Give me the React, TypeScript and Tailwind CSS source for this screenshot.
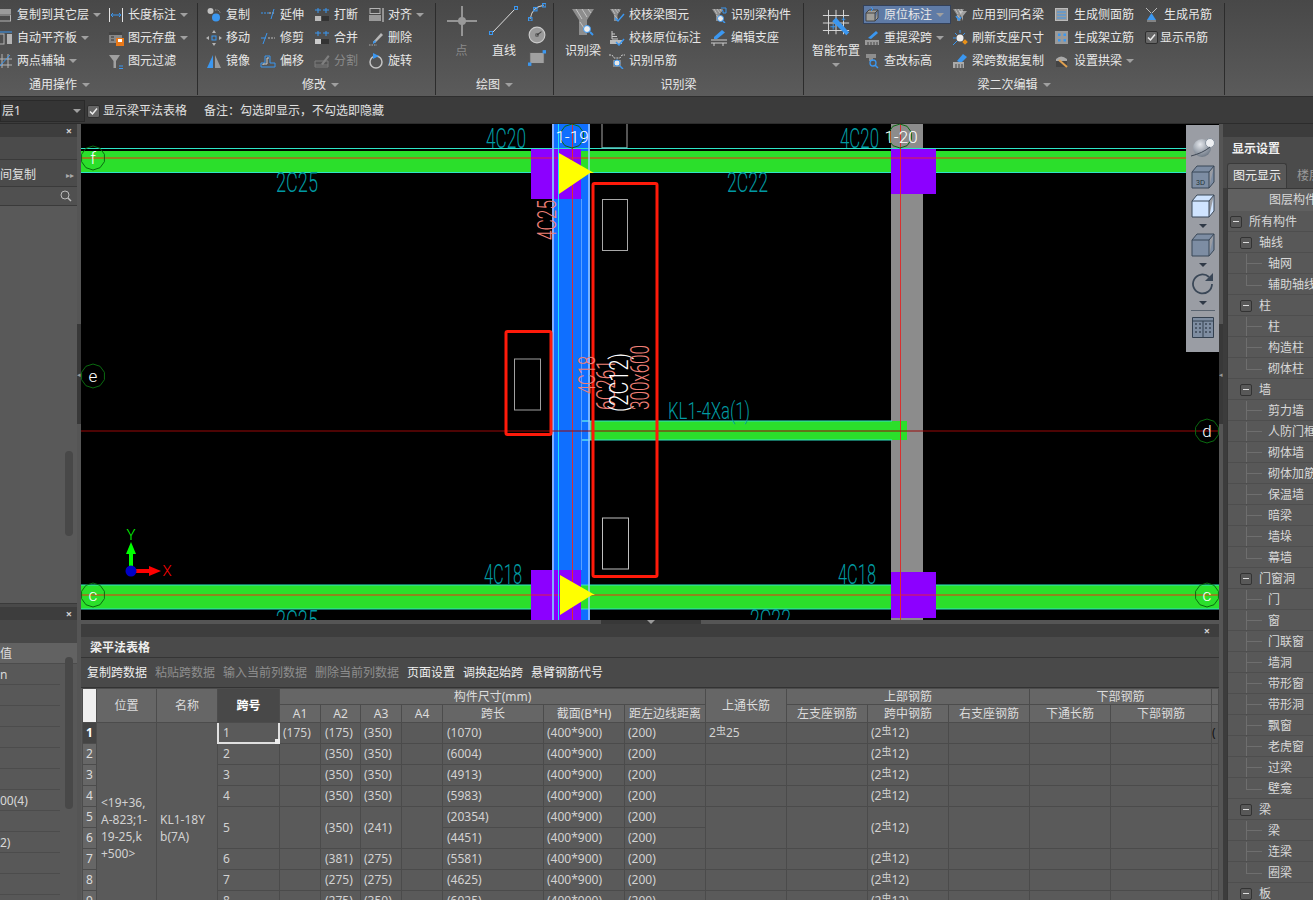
import type { ReactNode } from "react";

const B = "#3b97f0";
const G = "#b4b4b4";
const W = "#e4e4e4";

function S({ children, size = 16 }: { children: ReactNode; size?: number }) {
  return (
    <svg width={size} height={size} viewBox="0 0 16 16" fill="none" className="shrink-0">
      {children}
    </svg>
  );
}

const Hatch = (
  <>
    <path d="M1 2h11L8.500 8v6H5V8z" fill="#8d8d8d" />
    <path d="M3 2l3 5M6 2l3 4M9 2l1.500 2.500M5.500 8l3 4" stroke="#c4c4c4" strokeWidth="0.8" />
  </>
);

const icons: Record<string, ReactNode> = {
  copyLayer: (
    <S>
      <rect x="1" y="2" width="13" height="5" fill="#9a9a9a" />
      <rect x="1.500" y="8" width="12" height="6" stroke={G} />
    </S>
  ),
  autoAlign: (
    <S>
      <path d="M1 2h14" stroke={B} />
      <rect x="2" y="4" width="5" height="10" stroke={G} />
      <rect x="10" y="4" width="5" height="10" fill={G} />
    </S>
  ),
  twoPoint: (
    <S>
      <path d="M0 6h15M0 12h15M5 1v14M11 1v14" stroke={G} />
      <path d="M1 15L13 2" stroke={B} />
    </S>
  ),
  lengthDim: (
    <S>
      <path d="M1.500 1v14M14.500 1v14" stroke={W} />
      <path d="M3 8h10M3 8l2-2M3 8l2 2M13 8l-2-2M13 8l-2 2" stroke={B} />
    </S>
  ),
  saveEl: (
    <S>
      <rect x="1" y="2" width="13" height="11" fill="#888" />
      <rect x="1" y="2" width="13" height="3" fill="#444" />
      <path d="M3 7h3M3 10h3" stroke="#333" />
      <rect x="8" y="8" width="8" height="8" fill="#e8791a" />
      <rect x="10" y="9" width="4" height="3" fill="#fff" />
    </S>
  ),
  filter: (
    <S>
      <path d="M1 2h11L8 8v7H5.500V8z" fill="#a0a0a0" />
      <path d="M11 13h4M11 15.500h4" stroke={B} />
    </S>
  ),
  copy: (
    <S>
      <circle cx="4.500" cy="4" r="3" fill="#c0c0c0" />
      <circle cx="10" cy="10.500" r="4" fill={B} />
      <path d="M9 3h3l2 2v1" stroke="#999" strokeDasharray="1.500 1" />
    </S>
  ),
  move: (
    <S>
      <rect x="6" y="6" width="4" height="4" stroke={B} />
      <path d="M8 0l2 3H6zM8 16l2-3H6zM0 8l3-2v4zM16 8l-3-2v4z" fill={G} />
    </S>
  ),
  mirror: (
    <S>
      <path d="M7 2v13H1z" fill={B} />
      <path d="M9 2v13h6z" fill="#9a9a9a" />
    </S>
  ),
  extend: (
    <S>
      <path d="M1 6h8" stroke={B} strokeDasharray="2 1" />
      <path d="M9 6h6" stroke="#bbb" strokeDasharray="2 1" />
      <path d="M11 12l3-10" stroke={B} />
    </S>
  ),
  trim: (
    <S>
      <path d="M1 8h5" stroke={B} />
      <path d="M8 8h7" stroke="#bbb" strokeDasharray="2 1" />
      <path d="M3 14l4-11" stroke={B} />
    </S>
  ),
  offset: (
    <S>
      <path d="M1 14V10h4V3h5v7h5v4z" stroke={B} strokeLinejoin="round" />
      <path d="M3 12v-1h4V5h2" stroke="#ccc" />
    </S>
  ),
  breakEl: (
    <S>
      <path d="M4 1v5M1 3h6M12 1v5M9 3h6" stroke={B} />
      <rect x="1" y="9" width="6" height="5" fill="#bbb" />
      <rect x="8" y="9" width="7" height="5" fill="#333" />
    </S>
  ),
  merge: (
    <S>
      <path d="M4 1v5M1 3h6M12 1v5M9 3h6" stroke={B} />
      <rect x="1" y="9" width="6" height="5" fill="#ccc" />
      <rect x="7" y="9" width="8" height="5" fill="#333" />
    </S>
  ),
  split: (
    <S>
      <path d="M1 8h13v6H1zM1 12h13" stroke="#7c7c7c" />
      <path d="M7 11l7-9 1.500 1.500L9 12z" fill="#808080" />
    </S>
  ),
  align: (
    <S>
      <rect x="2" y="1.500" width="10" height="5" stroke={G} />
      <rect x="1" y="8" width="12" height="6" fill="#999" />
      <path d="M15 1v14" stroke="#ddd" />
    </S>
  ),
  del: (
    <S>
      <path d="M5 12l8-9 2 2-8 8z" fill="#b8b8b8" />
      <path d="M5 12l2-2 1 2-3 2z" fill={B} />
      <path d="M1 15h8" stroke="#aaa" strokeDasharray="1.500 1" />
    </S>
  ),
  rotate: (
    <S>
      <circle cx="8" cy="9" r="6" stroke="#c4c4c4" strokeWidth="1.500" />
      <path d="M5 0l6 3-6 3z" fill={B} />
    </S>
  ),
  arc: (
    <S size={18}>
      <path d="M2 14C3 7 7 3 14 2" stroke="#ccc" />
      <rect x="0.500" y="13" width="3" height="3" stroke={B} />
      <rect x="5" y="4" width="3" height="3" stroke={B} />
      <rect x="13" y="0.500" width="3" height="3" stroke={B} />
    </S>
  ),
  circle: (
    <S size={18}>
      <circle cx="8" cy="8" r="7" fill="#9a9a9a" stroke="#ccc" />
      <path d="M8 8l4-3" stroke="#444" />
      <rect x="7" y="7" width="2" height="2" stroke="#333" strokeWidth="0.600" />
    </S>
  ),
  rect: (
    <S size={18}>
      <rect x="1.500" y="3" width="13" height="10" fill="#a0a0a0" stroke="#555" />
      <rect x="0" y="12" width="3" height="3" fill={B} />
      <rect x="13" y="1" width="3" height="3" fill={B} />
    </S>
  ),
  checkBeam: (
    <S>
      {Hatch}
      <path d="M6 11l3 3 6-7" stroke={B} strokeWidth="1.500" />
    </S>
  ),
  checkLabel: (
    <S>
      <path d="M3 1v8h6M3 4h3M3 6.500h5" stroke="#ccc" />
      <path d="M1 10h12v4H1z" fill="#bbb" />
      <path d="M7 12l3 3 5-6" stroke={B} strokeWidth="1.500" />
    </S>
  ),
  hanger: (
    <S>
      <path d="M0 2h3l2 3h6l2-3h3" stroke="#ccc" strokeDasharray="2 1" />
      <rect x="4" y="7" width="8" height="7" fill="#888" />
      <circle cx="8" cy="10" r="3" fill="#e8e8e8" stroke={B} />
      <path d="M11 13l3 3" stroke={B} strokeWidth="1.500" />
    </S>
  ),
  beamPart: (
    <S>
      {Hatch}
      <path d="M10 1h5v5h-3V3.500h-1" stroke={B} />
      <circle cx="9.500" cy="11.500" r="3" fill="#e8e8e8" stroke={B} />
      <path d="M12 14l2 2" stroke={B} strokeWidth="1.500" />
    </S>
  ),
  editSupport: (
    <S>
      <path d="M3 7l8-7 3 2.500-8 6.500H3z" fill={B} />
      <path d="M0 10h16M0 13h16M3 13v3M12 13v3" stroke="#ccc" />
    </S>
  ),
  originLabel: (
    <S>
      <path d="M2 6h9v8H2zM2 6l3-3h9l-3 3M11 14l3-3V3" stroke="#444" fill="#a09f9a" />
      <path d="M7 0l2 2-2 2" stroke={B} />
    </S>
  ),
  reExtract: (
    <S>
      <path d="M4 8l8-7 2 2-7 6z" fill={B} />
      <path d="M1 10h14v5H1z" fill="#9a9a9a" />
      <path d="M4 12v3M7 12v3M10 12v3M13 12v3" stroke="#444" />
    </S>
  ),
  checkLevel: (
    <S>
      <path d="M2 1h10v4H9v3H5V5H2z" fill="#8e8e8e" />
      <circle cx="9" cy="10" r="3" stroke={B} strokeWidth="1.300" />
      <path d="M11 12l3 3" stroke={B} strokeWidth="1.500" />
    </S>
  ),
  applySame: (
    <S>
      {Hatch}
      <path d="M7 4h8l-4 5v5" fill="#ddd" opacity="0.6" />
      <path d="M4 9l3 4 2-3" stroke={B} strokeWidth="1.500" />
    </S>
  ),
  refresh: (
    <S>
      <circle cx="8" cy="8" r="3.500" fill="#eee" />
      <path d="M8 0v3M1 8h3M3 3l2 2M13 3l-2 2M3 13l2-2M1 15l3-3" stroke={B} />
      <rect x="11" y="10" width="4" height="4" fill="#e8911a" transform="rotate(45 13 12)" />
    </S>
  ),
  spanCopy: (
    <S>
      <path d="M5 8l6-7 4 3-6 6z" fill={B} />
      <path d="M1 9h11v6H1z" fill="#aaa" />
      <path d="M4 11v4M7 11v4M10 11v4" stroke="#444" />
    </S>
  ),
  sideBar: (
    <S>
      <rect x="1.500" y="1.500" width="12" height="12" fill="#9a9a9a" stroke="#bbb" />
      <path d="M3 5h9M3 8h9M3 11h9" stroke={B} />
    </S>
  ),
  frameBar: (
    <S>
      <rect x="1" y="1" width="13" height="13" fill="#9a9a9a" />
      <rect x="4" y="3.500" width="2.500" height="2.500" fill={B} />
      <rect x="9.500" y="3.500" width="2.500" height="2.500" fill={B} />
      <rect x="4" y="9" width="2.500" height="2.500" fill={B} />
      <rect x="9.500" y="9" width="2.500" height="2.500" fill={B} />
    </S>
  ),
  arch: (
    <S>
      <path d="M2 6q5-5 11 0v2H2z" fill="#a8a8a8" />
      <path d="M2 8h11v6H2z" fill="#444" />
      <path d="M5 7l8 7" stroke="#e0a050" strokeWidth="2" />
    </S>
  ),
  genHanger: (
    <S>
      <path d="M2 1l5 5M13 1L8 6" stroke="#bbb" />
      <path d="M7.500 6L12 13H3z" fill={B} />
      <path d="M3 14h9" stroke="#bbb" />
    </S>
  ),
};

function Caret({ color = "border-t-[#a0a0a0]" }: { color?: string }) {
  return <span className={`w-0 h-0 shrink-0 border-x-[4px] border-t-[4px] border-x-transparent ${color}`} />;
}

function Item({ icon, label, arrow, active, dim }: { icon: string; label: string; arrow?: boolean; active?: boolean; dim?: boolean }) {
  return (
    <div
      className={`flex h-[23px] items-center whitespace-nowrap ${dim ? "text-[#8a8a8a]" : "text-[#e8e8e8]"}`}
    >
      <span
        className={`flex h-[19px] items-center pr-[6px] ${active ? "bg-[#5f7ba6] border border-[#33415a] -ml-[1px]" : ""}`}
      >
        {icons[icon]}
        <span className="ml-1">{label}</span>
        {arrow && (
          <span className="ml-[4px] flex">
            <Caret />
          </span>
        )}
      </span>
    </div>
  );
}

function Col({ w, items }: { w: string; items: { icon: string; label: string; arrow?: boolean; active?: boolean; dim?: boolean }[] }) {
  return (
    <div className={`flex flex-col shrink-0 ${w}`}>
      {items.map((it) => (
        <Item key={it.label} {...it} />
      ))}
    </div>
  );
}

function Group({ w, label, arrow, children, labelClass }: { w: string; label: string; arrow?: boolean; children: ReactNode; labelClass?: string }) {
  return (
    <div className={`flex flex-col shrink-0 h-[92px] mt-[3px] border-r border-[#2c2c2c] ${w}`}>
      <div className="flex h-[69px]">{children}</div>
      <div className={`flex flex-1 items-center gap-[5px] pt-[3px] text-[#e8e8e8] ${labelClass ?? "justify-center"}`}>
        <span>{label}</span>
        {arrow && <Caret />}
      </div>
    </div>
  );
}

function Ribbon() {
  return (
    <div className="flex h-[97px] shrink-0 overflow-hidden bg-linear-to-b from-[#484848] to-[#5b5b5b] border-b border-[#2e2e2e]">
      <Group w="w-[198px]" label="通用操作" arrow labelClass="pl-[29px]">
        <Col
          w="w-[111px] -ml-[3px]"
          items={[
            { icon: "copyLayer", label: "复制到其它层", arrow: true },
            { icon: "autoAlign", label: "自动平齐板", arrow: true },
            { icon: "twoPoint", label: "两点辅轴", arrow: true },
          ]}
        />
        <Col
          w="w-[90px]"
          items={[
            { icon: "lengthDim", label: "长度标注", arrow: true },
            { icon: "saveEl", label: "图元存盘", arrow: true },
            { icon: "filter", label: "图元过滤" },
          ]}
        />
      </Group>
      <Group w="w-[238px] pl-[8px]" label="修改" arrow>
        <Col w="w-[54px]" items={[{ icon: "copy", label: "复制" }, { icon: "move", label: "移动" }, { icon: "mirror", label: "镜像" }]} />
        <Col w="w-[54px]" items={[{ icon: "extend", label: "延伸" }, { icon: "trim", label: "修剪" }, { icon: "offset", label: "偏移" }]} />
        <Col w="w-[54px]" items={[{ icon: "breakEl", label: "打断" }, { icon: "merge", label: "合并" }, { icon: "split", label: "分割", dim: true }]} />
        <Col w="w-[60px]" items={[{ icon: "align", label: "对齐", arrow: true }, { icon: "del", label: "删除" }, { icon: "rotate", label: "旋转" }]} />
      </Group>
      <Group w="w-[118px]" label="绘图" arrow>
        <div className="w-[47px] flex flex-col items-center pt-[3px] pl-[4px]">
          <svg width="30" height="30" viewBox="0 0 30 30" fill="none">
            <path d="M15 0v30M0 15h30" stroke="#ddd" />
            <circle cx="15" cy="15" r="4" fill="#999" />
          </svg>
          <span className="mt-[9px] text-[#8a8a8a]">点</span>
        </div>
        <div className="w-[42px] flex flex-col items-center pt-[3px]">
          <svg width="30" height="30" viewBox="0 0 30 30" fill="none">
            <path d="M3 27L26 3" stroke="#ddd" />
            <rect x="0.500" y="25.500" width="3" height="3" stroke={B} />
            <rect x="25.500" y="0.500" width="3" height="3" stroke={B} />
          </svg>
          <span className="mt-[9px] text-[#e8e8e8]">直线</span>
        </div>
        <div className="flex flex-col gap-[5px] pl-[3px]">
          {icons.arc}
          {icons.circle}
          {icons.rect}
        </div>
      </Group>
      <Group w="w-[250px]" label="识别梁">
        <div className="w-[55px] flex flex-col items-center pt-[3px] pl-[3px] text-[#e8e8e8]">
          <svg width="26" height="30" viewBox="0 0 26 30" fill="none">
            <path d="M2 3h22l-7 11v15H9V14z" fill="#8d8d8d" />
            <path d="M6 3l6 10M12 3l5 8M18 3l3 4M10 16l6 9" stroke="#c4c4c4" />
            <circle cx="17" cy="23" r="3.500" fill="#eee" stroke={B} />
            <path d="M20 26l3 3" stroke={B} strokeWidth="2" />
          </svg>
          <span className="mt-[9px]">识别梁</span>
        </div>
        <Col w="w-[102px]" items={[{ icon: "checkBeam", label: "校核梁图元" }, { icon: "checkLabel", label: "校核原位标注" }, { icon: "hanger", label: "识别吊筋" }]} />
        <Col w="w-[90px]" items={[{ icon: "beamPart", label: "识别梁构件" }, { icon: "editSupport", label: "编辑支座" }]} />
      </Group>
      <Group w="w-[421px]" label="梁二次编辑" arrow>
        <div className="w-[60px] flex flex-col items-center pt-[5px] pl-[4px] text-[#e8e8e8]">
          <svg width="30" height="30" viewBox="0 0 32 32" fill="none">
            <path d="M8 2v26M16 2v26M24 2v26M2 8h28M2 16h28M2 24h28" stroke="#ddd" />
            <path d="M12 14l4-4 14 16-3 3z" fill={B} />
            <path d="M10 20h6M13 17v6M22 12h4M24 10v4" stroke={B} />
          </svg>
          <span className="mt-[7px]">智能布置</span>
          <span className="mt-[6px] flex">
            <Caret />
          </span>
        </div>
        <Col
          w="w-[88px]"
          items={[
            { icon: "originLabel", label: "原位标注", arrow: true, active: true },
            { icon: "reExtract", label: "重提梁跨", arrow: true },
            { icon: "checkLevel", label: "查改标高" },
          ]}
        />
        <Col w="w-[102px]" items={[{ icon: "applySame", label: "应用到同名梁" }, { icon: "refresh", label: "刷新支座尺寸" }, { icon: "spanCopy", label: "梁跨数据复制" }]} />
        <Col
          w="w-[90px]"
          items={[
            { icon: "sideBar", label: "生成侧面筋" },
            { icon: "frameBar", label: "生成架立筋" },
            { icon: "arch", label: "设置拱梁", arrow: true },
          ]}
        />
        <div className="flex flex-col">
          <Item icon="genHanger" label="生成吊筋" />
          <div className="flex h-[23px] items-center text-[#e8e8e8] ml-px">
            <CheckBox />
            <span className="ml-[2px]">显示吊筋</span>
          </div>
        </div>
      </Group>
    </div>
  );
}

function CheckBox() {
  return (
    <span className="flex h-[13px] w-[13px] shrink-0 items-center justify-center rounded-[2px] border border-[#2f2f2f] bg-[#666]">
      <svg width="9" height="9" viewBox="0 0 9 9" fill="none">
        <path d="M1 4.500l2.500 2.500L8 1.500" stroke="#eee" strokeWidth="1.500" />
      </svg>
    </span>
  );
}

function OptionsBar() {
  return (
    <div className="flex h-[27px] shrink-0 items-center bg-[#3b3b3b] pt-[2px] text-[#e0e0e0] border-b border-[#2c2c2c]">
      <div className="flex h-[22px] w-[85px] items-center justify-between bg-[#353535] border border-[#2a2a2a] pr-[3px] pl-[1px]">
        <span>层1</span>
        <Caret />
      </div>
      <span className="ml-[2px]">
        <CheckBox />
      </span>
      <span className="ml-[3px]">显示梁平法表格</span>
      <span className="ml-[17px]">备注：勾选即显示，不勾选即隐藏</span>
    </div>
  );
}

function PanelHead() {
  return (
    <div className="flex h-[13px] shrink-0 items-center justify-end bg-[#3d3d3d] pr-[5px] text-[11px] font-bold leading-none text-[#d0d0d0]">
      ×
    </div>
  );
}

function LeftPanel() {
  const rows = ["n", "", "", "", "", "", "00(4)", "", "2)", "", "", ""];
  return (
    <div className="flex w-[77px] shrink-0 flex-col bg-[#494949] text-[#e0e0e0]">
      <PanelHead />
      <div className="h-[23px] shrink-0 bg-[#4b4b4b] border-b border-[#3a3a3a]" />
      <div className="flex h-[27px] shrink-0 items-center justify-between pr-[3px] pt-[3px] bg-[#4b4b4b] border-b border-[#3a3a3a]">
        <span>间复制</span>
        <span className="text-[8px] text-[#aaa]">▸▸</span>
      </div>
      <div className="flex h-[19px] shrink-0 items-center justify-end pr-[5px] bg-[#505050] border-b border-[#3a3a3a]">
        <svg width="12" height="12" viewBox="0 0 12 12" fill="none">
          <circle cx="5" cy="5" r="4" stroke="#bbb" />
          <path d="M8 8l3 3" stroke="#bbb" strokeWidth="1.500" />
        </svg>
      </div>
      <div className="relative h-[398px] shrink-0 bg-[#595959] border-b border-[#3a3a3a]">
        <div className="absolute right-[4px] top-[245px] h-[85px] w-[8px] rounded bg-[#484848]" />
      </div>
      <div className="h-[3px] shrink-0" />
      <PanelHead />
      <div className="h-[23px] shrink-0 bg-[#484848]" />
      <div className="relative flex-1 overflow-hidden bg-[#585858]">
        <div className="flex h-[21px] items-center bg-[#626262] border-b border-[#4c4c4c] pt-px text-[#ddd]">值</div>
        {rows.map((r, i) => (
          <div key={i} className="flex h-[21px] w-[60px] items-center border-b border-[#4c4c4c] pt-[2px] text-[#d8d8d8]">
            {r}
          </div>
        ))}
        <div className="absolute right-[4px] top-[14px] h-[152px] w-[8px] rounded bg-[#484848]" />
      </div>
    </div>
  );
}

function Splitter() {
  return (
    <div className="flex w-[4px] shrink-0 items-start bg-[#555] pt-[200px]">
      <div className="flex h-[100px] w-[4px] items-center justify-center bg-[#383838]">
        <span className="text-[7px] leading-none text-[#999]">◂</span>
      </div>
    </div>
  );
}

function Ring({ cx, cy, label }: { cx: number; cy: number; label?: string }) {
  const pts = Array.from({ length: 10 }, (_, i) => {
    const a = (i / 10) * Math.PI * 2 - Math.PI / 2;
    return `${cx + 12 * Math.cos(a)},${cy + 12 * Math.sin(a)}`;
  }).join(" ");
  return (
    <>
      <polygon points={pts} stroke="#0a6a10" fill="none" />
      {label && (
        <text x={cx} y={cy + 6} textAnchor="middle" fontSize="17" fontWeight="300" fill="#fff" fontFamily="Roboto">
          {label}
        </text>
      )}
    </>
  );
}

function Cad({ x, y, w, size, label, fill = "#009aa2", rot }: { x: number; y: number; w: number; size: number; label: string; fill?: string; rot?: boolean }) {
  return (
    <text
      x={x}
      y={y}
      fontSize={size}
      fontWeight="300"
      fill={fill}
      fontFamily="Roboto"
      textLength={w}
      lengthAdjust="spacingAndGlyphs"
      transform={rot ? `rotate(-90 ${x} ${y})` : undefined}
    >
      {label}
    </text>
  );
}

function Scene() {
  return (
    <svg viewBox="81 124 1138 496" width="1138" height="496" className="block">
      <rect x="81" y="124" width="1138" height="496" fill="#000" />
      {/* 柱 */}
      <rect x="891" y="124" width="32" height="496" fill="#8c8c8c" />
      <rect x="552" y="124" width="38" height="496" fill="#0f6fff" />
      {/* 梁 */}
      <rect x="81" y="151" width="1138" height="22" fill="#2bdf2b" />
      <path d="M81 148.500h1138M81 172.500h1138" stroke="#2ee6c8" />
      <path d="M81 158h1138" stroke="#b0681a" strokeWidth="1.500" />
      <rect x="81" y="585" width="1138" height="24" fill="#2bdf2b" />
      <path d="M81 585h1138M81 609h1138" stroke="#2ee6c8" />
      <path d="M81 595h1138" stroke="#b0681a" strokeWidth="1.500" />
      <rect x="590" y="421" width="317" height="19" fill="#2bdf2b" />
      <path d="M581 421h311M581 440h311" stroke="#2ee6c8" />
      <path d="M581 421h9v19h-9" stroke="#6fd8ff" fill="none" />
      {/* 支座 */}
      <rect x="531" y="149" width="50" height="50" fill="#8c00ff" />
      <rect x="531" y="570" width="50" height="50" fill="#8c00ff" />
      <rect x="891" y="149" width="45" height="45" fill="#8c00ff" />
      <rect x="891" y="572" width="45" height="46" fill="#8c00ff" />
      <path d="M531 158h50M891 158h45M531 595h50M891 595h45" stroke="#e02040" />
      <path d="M553 124v496" stroke="#86aefc" strokeWidth="2" />
      <path d="M589 124v496" stroke="#9cc8ff" strokeWidth="1.500" />
      <path d="M558.500 124v496" stroke="#22e0f0" />
      <path d="M581.500 199v371" stroke="#5aa0ff" />
      {/* 轴线 */}
      <path d="M572.500 124v496M900.500 124v496" stroke="#d83030" />
      <path d="M81 431h1138" stroke="#9a0808" />
      <polygon points="559,153 559,194 590,173 594,173" fill="#ffff00" />
      <polygon points="560,575 560,615 592,595 595,595" fill="#ffff00" />
      {/* 选择框 */}
      <rect x="593" y="183.500" width="64" height="393" rx="1.500" stroke="#ff1a0a" strokeWidth="3" fill="none" />
      <rect x="506" y="331.500" width="45" height="103" rx="1.500" stroke="#ff1a0a" strokeWidth="3" fill="none" />
      <path d="M602 124v24h25v-24" stroke="#a8a8a8" fill="none" />
      <path d="M602 148h25" stroke="#30e0d0" />
      <rect x="602.500" y="199.500" width="25" height="51" stroke="#a8a8a8" fill="none" />
      <rect x="602.500" y="518" width="26" height="51" stroke="#c0c0c0" fill="none" />
      <rect x="514.500" y="359" width="26" height="51" stroke="#a0a0a0" fill="none" />
      {/* 标注 */}
      <Cad x={486} y={148} w={40} size={28} label="4C20" />
      <Cad x={840} y={148} w={39} size={28} label="4C20" />
      <Cad x={276} y={192} w={42} size={28} label="2C25" />
      <Cad x={727} y={192} w={41} size={28} label="2C22" />
      <Cad x={484} y={584} w={38} size={28} label="4C18" />
      <Cad x={838} y={584} w={38} size={28} label="4C18" />
      <Cad x={276} y={630} w={42} size={28} label="2C25" />
      <Cad x={750} y={629} w={41} size={28} label="2C22" />
      <Cad x={668} y={419} w={82} size={24} label="KL1-4Xa(1)" />
      <Cad x={556} y={240} w={40} size={26} label="4C25" fill="#f08078" rot />
      <Cad x={595} y={394} w={38} size={24} label="4C18" fill="#f08078" rot />
      <Cad x={615} y={410} w={50} size={26} label="6C261" fill="#f08078" rot />
      <Cad x={628} y={412} w={59} size={26} label="(2C12)" fill="#ffffff" rot />
      <Cad x={649} y={410} w={65} size={26} label="300x600" fill="#f08078" rot />
      <Ring cx={93} cy={158} label="f" />
      <Ring cx={93} cy={376} label="e" />
      <Ring cx={93} cy={595} label="c" />
      <Ring cx={1207} cy={431} label="d" />
      <Ring cx={1207} cy={595} label="c" />
      <Ring cx={572} cy={136} />
      <Ring cx={900} cy={136} />
      <text x={572} y={143} textAnchor="middle" fontSize="17" fontWeight="300" fill="#fff" fontFamily="Roboto">1-19</text>
      <text x={901} y={143} textAnchor="middle" fontSize="17" fontWeight="300" fill="#fff" fontFamily="Roboto">1-20</text>
      {/* 坐标 */}
      <path d="M131 571v-22" stroke="#00ff00" strokeWidth="4" />
      <polygon points="131,542 136,554 126,554" fill="#00ff00" />
      <path d="M131 571h20" stroke="#ff0000" strokeWidth="4" />
      <polygon points="161,571 149,566 149,576" fill="#ff0000" />
      <circle cx="131" cy="571" r="5.500" fill="#0000c8" />
      <text x="131" y="540" textAnchor="middle" fontSize="15" fill="#00ff00" fontFamily="Roboto" fontWeight="300">Y</text>
      <text x="167" y="576" textAnchor="middle" fontSize="15" fill="#ff0000" fontFamily="Roboto" fontWeight="300">X</text>
    </svg>
  );
}

function ViewBar() {
  const Cube = ({ face, label }: { face: string; label?: string }) => (
    <svg width="24" height="24" viewBox="0 0 24 24" fill="none">
      <path d="M1 7h17v16H1zM1 7l5-6h17l-5 6M18 23l5-6V1" fill={face} stroke="#394757" />
      {label && (
        <text x="9.500" y="20" textAnchor="middle" fontSize="7" fill="#233" fontFamily="Liberation Sans">
          {label}
        </text>
      )}
    </svg>
  );
  const C = () => <Caret color="border-t-[#2f3946]" />;
  return (
    <div className="absolute right-0 top-px flex h-[227px] w-[33px] flex-col items-center bg-[#9a9da4] pt-[12px]">
      <svg width="26" height="21" viewBox="0 0 26 21" fill="none">
        <defs>
          <radialGradient id="ball" cx="0.4" cy="0.3" r="0.8">
            <stop offset="0" stopColor="#e4e7ec" />
            <stop offset="1" stopColor="#5f6a78" />
          </radialGradient>
        </defs>
        <circle cx="12" cy="11" r="9" fill="url(#ball)" />
        <circle cx="20" cy="6" r="4.500" fill="#eef0f3" stroke="#8a94a0" />
        <path d="M1 19q12-3 19-9" stroke="#3d4653" />
      </svg>
      <div className="mt-[7px] flex">
        <Cube face="#7d8da3" label="3D" />
      </div>
      <div className="mt-[5px] flex">
        <Cube face="#cfe4ff" />
      </div>
      <div className="mt-[6px] flex">
        <C />
      </div>
      <div className="mt-[5px] flex">
        <Cube face="#7d8da3" />
      </div>
      <div className="mt-[6px] flex">
        <C />
      </div>
      <svg className="mt-[5px]" width="24" height="24" viewBox="0 0 24 24" fill="none">
        <path d="M21 12a9.500 9.500 0 1 1-3-7" stroke="#3a4757" strokeWidth="1.800" />
        <path d="M22 1v8h-8" fill="#3a4757" />
      </svg>
      <div className="mt-[5px] flex">
        <C />
      </div>
      <div className="mt-[5px] h-px w-[24px] bg-[#5a6470]" />
      <svg className="mt-[5px]" width="24" height="23" viewBox="0 0 24 23" fill="none">
        <path d="M1.500 1.500h21v20h-21zM1.500 5h21M12 5v16" fill="#7e8da1" stroke="#33404f" />
        <path d="M4 8h2M8 8h2M4 12h2M8 12h2M4 16h2M8 16h2M14 8h2M18 8h2M14 12h2M18 12h2M14 16h2M18 16h2" stroke="#1d2733" />
      </svg>
    </div>
  );
}

type Row = { no: number; a1?: string; a2: string; a3: string; len: string; span?: number };

const rows: Row[] = [
  { no: 1, a1: "(175)", a2: "(175)", a3: "(350)", len: "(1070)" },
  { no: 2, a2: "(350)", a3: "(350)", len: "(6004)" },
  { no: 3, a2: "(350)", a3: "(350)", len: "(4913)" },
  { no: 4, a2: "(350)", a3: "(350)", len: "(5983)" },
  { no: 5, a2: "(350)", a3: "(241)", len: "(20354)", span: 2 },
  { no: 0, a2: "", a3: "", len: "(4451)" },
  { no: 6, a2: "(381)", a3: "(275)", len: "(5581)" },
  { no: 7, a2: "(275)", a3: "(275)", len: "(4625)" },
  { no: 8, a2: "(275)", a3: "(350)", len: "(6025)" },
];

const colWidths = [14, 60, 61, 62, 41, 40, 41, 41, 101, 81, 81, 81, 81, 81, 81, 81, 101, 7];

const th = "border border-[#4c4c4c] bg-[#666666] text-center font-normal text-[#dcdcdc] p-0";
const td = "border border-[#4b4b4b] p-0 pl-[3px] text-[#d2d2d2]";

function Rebar() {
  return <span className="relative -top-[3px] text-[10px]">虫</span>;
}

function BeamTable() {
  return (
    <div className="h-[212px] overflow-hidden">
      <table className="ml-px w-[1136px] table-fixed border-collapse">
        <colgroup>
          {colWidths.map((w, i) => (
            <col key={i} style={{ width: w }} />
          ))}
        </colgroup>
        <thead>
          <tr className="h-[16px]">
            <th rowSpan={2} className="border border-[#4c4c4c] bg-[#efefef] p-0" />
            <th rowSpan={2} className={th}>位置</th>
            <th rowSpan={2} className={th}>名称</th>
            <th rowSpan={2} className="border border-[#4c4c4c] bg-[#484848] p-0 font-bold text-white">跨号</th>
            <th colSpan={7} className={th}>构件尺寸(mm)</th>
            <th rowSpan={2} className={th}>上通长筋</th>
            <th colSpan={3} className={th}>上部钢筋</th>
            <th colSpan={2} className={th}>下部钢筋</th>
            <th className={th} />
          </tr>
          <tr className="h-[18px]">
            {["A1", "A2", "A3", "A4", "跨长", "截面(B*H)", "距左边线距离", "左支座钢筋", "跨中钢筋", "右支座钢筋", "下通长筋", "下部钢筋", ""].map((h, i) => (
              <th key={i} className={`${th} whitespace-nowrap`}>{h}</th>
            ))}
          </tr>
        </thead>
        <tbody>
          {rows.map((r, i) => {
            const merged = r.no === 0;
            return (
              <tr key={i} className="h-[21px]">
                <td className={`border border-[#4c4c4c] p-0 text-center ${i === 0 ? "bg-[#444] font-bold text-white" : "bg-[#666] text-[#dcdcdc]"}`}>
                  {i + 1}
                </td>
                {i === 0 && (
                  <>
                    <td rowSpan={10} className={`${td} pl-[4px] leading-[17px] break-all`}>
                      &lt;19+36,
                      <br />
                      A-823;1-
                      <br />
                      19-25,k
                      <br />
                      +500&gt;
                    </td>
                    <td rowSpan={10} className={`${td} leading-[17px]`}>
                      KL1-18Y
                      <br />
                      b(7A)
                    </td>
                  </>
                )}
                {!merged && (
                  <td rowSpan={r.span} className={`${td} relative pl-[5px]`}>
                    {r.no}
                    {i === 0 && (
                      <span className="absolute -inset-x-px -bottom-px top-0 border-x-2 border-b-2 border-[#e0e0e0]">
                        <span className="absolute -bottom-[2px] -right-[2px] h-[5px] w-[5px] bg-[#eee]" />
                      </span>
                    )}
                  </td>
                )}
                {!merged && <td rowSpan={r.span} className={td}>{r.a1}</td>}
                {!merged && <td rowSpan={r.span} className={`${td} pl-[4px]`}>{r.a2}</td>}
                {!merged && <td rowSpan={r.span} className={td}>{r.a3}</td>}
                {!merged && <td rowSpan={r.span} className={td} />}
                <td className={`${td} pl-[4px]`}>{r.len}</td>
                <td className={td}>(400*900)</td>
                <td className={td}>(200)</td>
                {!merged && <td rowSpan={r.span} className={td}>{i === 0 && <span>2<Rebar />25</span>}</td>}
                {!merged && <td rowSpan={r.span} className={td} />}
                {!merged && (
                  <td rowSpan={r.span} className={`${td} text-[#111]`}>
                    (2<Rebar />12)
                  </td>
                )}
                {!merged && <td rowSpan={r.span} className={td} />}
                {!merged && <td rowSpan={r.span} className={td} />}
                {!merged && <td rowSpan={r.span} className={td} />}
                {!merged && (
                  <td rowSpan={r.span} className="border border-[#4b4b4b] p-0 overflow-hidden text-[#111]">
                    {i === 0 ? "(" : ""}
                  </td>
                )}
              </tr>
            );
          })}
          <tr className="h-[21px]">
            <td />
          </tr>
        </tbody>
      </table>
    </div>
  );
}

function BottomPanel() {
  return (
    <div className="flex flex-1 flex-col overflow-hidden bg-[#484848]">
      <div className="flex h-[13px] shrink-0 items-center justify-end bg-[#3d3d3d] pr-[9px] text-[11px] font-bold leading-none text-[#d0d0d0]">
        ×
      </div>
      <div className="flex h-[21px] shrink-0 items-center border-b border-[#353535] bg-[#4a4a4a] pl-[9px] pt-[2px] font-bold text-[#eee]">
        梁平法表格
      </div>
      <div className="flex h-[30px] shrink-0 items-center gap-[8px] border-b border-[#333] bg-[#494949] pl-[6px] text-[#eee]">
        <span>复制跨数据</span>
        <span className="text-[#8e8e8e]">粘贴跨数据</span>
        <span className="text-[#8e8e8e]">输入当前列数据</span>
        <span className="text-[#8e8e8e]">删除当前列数据</span>
        <span>页面设置</span>
        <span>调换起始跨</span>
        <span>悬臂钢筋代号</span>
      </div>
      <div className="flex-1 overflow-hidden bg-[#5a5a5a]">
        <BeamTable />
      </div>
    </div>
  );
}

type TreeNode = { t: string; l: 0 | 1 | 2; last?: boolean };

const tree: TreeNode[] = [
  { t: "所有构件", l: 0 },
  { t: "轴线", l: 1 },
  { t: "轴网", l: 2 },
  { t: "辅助轴线", l: 2, last: true },
  { t: "柱", l: 1 },
  { t: "柱", l: 2 },
  { t: "构造柱", l: 2 },
  { t: "砌体柱", l: 2, last: true },
  { t: "墙", l: 1 },
  { t: "剪力墙", l: 2 },
  { t: "人防门框墙", l: 2 },
  { t: "砌体墙", l: 2 },
  { t: "砌体加筋", l: 2 },
  { t: "保温墙", l: 2 },
  { t: "暗梁", l: 2 },
  { t: "墙垛", l: 2 },
  { t: "幕墙", l: 2, last: true },
  { t: "门窗洞", l: 1 },
  { t: "门", l: 2 },
  { t: "窗", l: 2 },
  { t: "门联窗", l: 2 },
  { t: "墙洞", l: 2 },
  { t: "带形窗", l: 2 },
  { t: "带形洞", l: 2 },
  { t: "飘窗", l: 2 },
  { t: "老虎窗", l: 2 },
  { t: "过梁", l: 2 },
  { t: "壁龛", l: 2, last: true },
  { t: "梁", l: 1 },
  { t: "梁", l: 2 },
  { t: "连梁", l: 2 },
  { t: "圈梁", l: 2, last: true },
  { t: "板", l: 1 },
];

function Minus({ ml }: { ml: string }) {
  return (
    <span className={`flex h-[12px] w-[12px] shrink-0 items-center justify-center rounded-[2px] border border-[#333] ${ml}`}>
      <span className="h-px w-[6px] bg-[#ddd]" />
    </span>
  );
}

function RightPanel() {
  return (
    <div className="flex w-[90px] shrink-0 flex-col overflow-hidden bg-[#3c3c3c]">
      <div className="h-[13px] shrink-0" />
      <div className="flex h-[21px] shrink-0 items-center whitespace-nowrap bg-[#4b4b4b] pl-[9px] pt-[2px] font-bold text-[#f0f0f0]">显示设置</div>
      <div className="flex h-[30px] shrink-0 items-end whitespace-nowrap bg-[#4b4b4b] pl-[4px]">
        <span className="flex h-[25px] w-[60px] shrink-0 items-center justify-center rounded-t-[3px] border border-b-0 border-[#3a3a3a] bg-[#585858] text-[#efefef]">图元显示</span>
        <span className="ml-[10px] shrink-0 self-center pt-[5px] text-[#9a9a9a]">楼层</span>
      </div>
      <div className="ml-[4px] flex-1 overflow-hidden whitespace-nowrap border-l border-t border-[#383838] bg-[#585858] text-[#d8d8d8]">
        <div className="flex h-[22px] w-[140px] items-center bg-[#606060] pl-[41px]">图层构件</div>
        {tree.map((n, i) => (
          <div key={i} className="flex h-[21px] items-center border-b border-[#4e4e4e] pt-px">
            {n.l === 0 && (
              <>
                <Minus ml="ml-[2px]" />
                <span className="ml-[7px]">{n.t}</span>
              </>
            )}
            {n.l === 1 && (
              <>
                <Minus ml="ml-[12px]" />
                <span className="ml-[7px]">{n.t}</span>
              </>
            )}
            {n.l === 2 && (
              <>
                <span className={`ml-[18px] w-[16px] shrink-0 border-l border-[#6e6e6e] ${n.last ? "h-[11px] self-start border-b" : "flex h-full items-center"}`}>
                  {!n.last && <span className="h-px w-full bg-[#6e6e6e]" />}
                </span>
                <span className="ml-[6px]">{n.t}</span>
              </>
            )}
          </div>
        ))}
      </div>
    </div>
  );
}

export default function App() {
  return (
    <div className="flex h-[900px] w-[1313px] flex-col overflow-hidden bg-[#3a3a3a] font-['Noto_Sans','Noto_Sans_CJK_SC',sans-serif] text-[12px] leading-none">
      <Ribbon />
      <OptionsBar />
      <div className="flex min-h-0 flex-1">
        <LeftPanel />
        <Splitter />
        <div className="flex w-[1138px] shrink-0 flex-col">
          <div className="relative h-[496px] shrink-0">
            <Scene />
            <ViewBar />
          </div>
          <div className="flex h-[4px] shrink-0 items-center bg-[#555]">
            <div className="ml-[520px] flex h-[4px] w-[100px] items-center justify-center bg-[#383838]">
              <span className="h-0 w-0 border-x-[4px] border-t-[4px] border-x-transparent border-t-[#999]" />
            </div>
          </div>
          <BottomPanel />
        </div>
        <Splitter />
        <RightPanel />
      </div>
    </div>
  );
}
